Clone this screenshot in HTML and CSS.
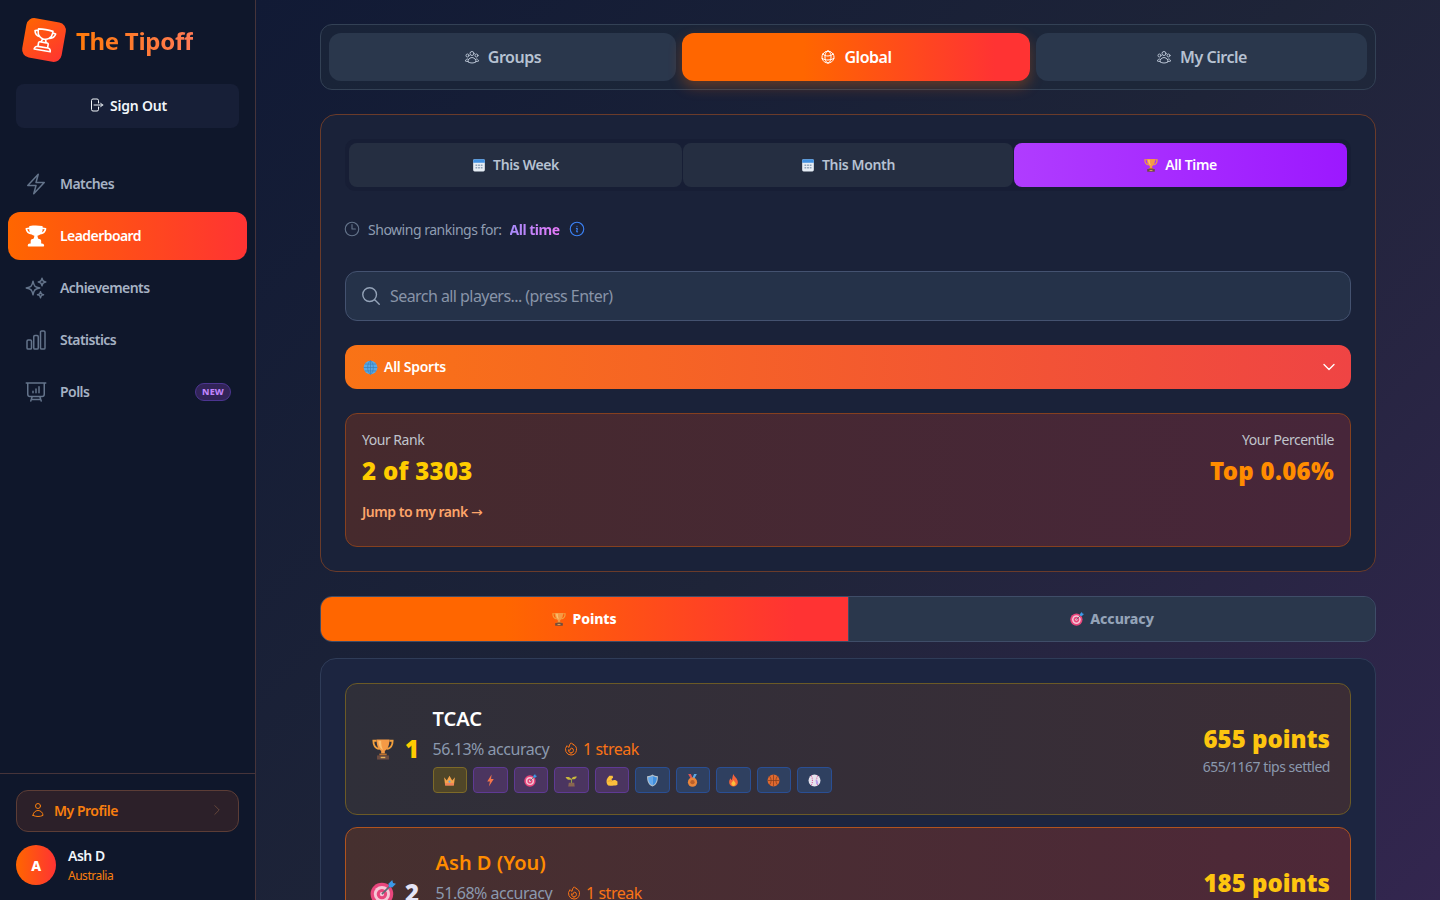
FILE: index.html
```html
<!DOCTYPE html>
<html>
  <head>
    <title>The Tipoff - Leaderboard</title>
    <link rel="stylesheet" href="styles.css">
  </head>
  <body>
    <svg class="sprite" width="0" height="0">
      <symbol id="em-trophy" viewBox="0 0 24 24">
        <path d="M5 3H1.5c0 5 2 8 6 9M19 3h3.5c0 5-2 8-6 9" fill="none" stroke="#f2a03d" stroke-width="2"/>
        <path d="M5 1.500h14c0 7-2 11-5 12.500v3h-4v-3C7 12.500 5 8.500 5 1.500z" fill="#f59a45"/>
        <path d="M7 3h3c0 4 .5 7 2 10-3-1-5-5-5-10z" fill="#fbc06f"/>
        <rect x="8" y="17" width="8" height="2" fill="#b9702f"/>
        <rect x="5.5" y="19" width="13" height="4.5" fill="#6d4c41"/>
        <rect x="9.5" y="20.5" width="5" height="1.5" fill="#e6b35c"/>
      </symbol>
      <symbol id="em-target" viewBox="0 0 24 24">
        <circle cx="11" cy="13" r="10.5" fill="#e8467c"/>
        <circle cx="11" cy="13" r="7.5" fill="#f6c6d6"/>
        <circle cx="11" cy="13" r="4.8" fill="#e8467c"/>
        <circle cx="11" cy="13" r="2" fill="#f6c6d6"/>
        <path d="M11 13 20 4" stroke="#5d6b76" stroke-width="1.5"/>
        <path d="M17 3.5 20.5 0l.8 2.7L24 3.5 20.5 7 17.5 6.500z" fill="#3b9ae8"/>
      </symbol>
      <symbol id="em-calendar" viewBox="0 0 24 24">
        <rect x="2" y="2" width="20" height="21" rx="2.5" fill="#e6edf5"/>
        <path d="M2 8V4.500A2.500 2.500 0 0 1 4.500 2h15A2.500 2.500 0 0 1 22 4.500V8z" fill="#3f8fe0"/>
        <path d="M6 11h3v2.500H6zM10.500 11h3v2.500h-3zM15 11h3v2.500h-3zM6 15.500h3V18H6zM10.500 15.500h3V18h-3zM15 15.500h3V18h-3z" fill="#8fa3b8"/>
      </symbol>
      <symbol id="em-globe" viewBox="0 0 24 24">
        <circle cx="12" cy="12" r="11" fill="#5aa9e6"/>
        <path d="M1 12h22M12 1v22M3 6.500h18M3 17.500h18M12 1C6 5 6 19 12 23M12 1c6 4 6 18 0 22" fill="none" stroke="#3d7fb5" stroke-width="1.1"/>
      </symbol>
      <symbol id="ic-bolt" viewBox="0 0 24 24"><path d="m3.750 13.500 10.500-11.250L12 10.500h8.250L9.750 21.750 12 13.500H3.750Z"/></symbol>
      <symbol id="ic-trophy" viewBox="0 0 24 24"><path d="M16.500 18.750h-9m9 0a3 3 0 0 1 3 3h-15a3 3 0 0 1 3-3m9 0v-3.375c0-.621-.503-1.125-1.125-1.125h-.871M7.500 18.750v-3.375c0-.621.504-1.125 1.125-1.125h.872m5.007 0H9.497m5.007 0a7.454 7.454 0 0 1-.982-3.172M9.497 14.250a7.454 7.454 0 0 0 .981-3.172M5.250 4.236c-.982.143-1.954.317-2.916.52A6.003 6.003 0 0 0 7.730 9.728M5.250 4.236V4.500c0 2.108.966 3.990 2.480 5.228M5.250 4.236V2.721C7.456 2.410 9.710 2.250 12 2.250c2.291 0 4.545.16 6.750.47v1.516M7.730 9.728a6.726 6.726 0 0 0 2.748 1.350m8.272-6.842V4.500c0 2.108-.966 3.990-2.480 5.228m2.480-5.492a46.320 46.320 0 0 1 2.916.52 6.003 6.003 0 0 1-5.395 4.972m0 0a6.726 6.726 0 0 1-2.749 1.350m0 0a6.772 6.772 0 0 1-3.044 0"/></symbol>
      <symbol id="ic-trophy-solid" viewBox="0 0 24 24"><path fill-rule="evenodd" d="M5.166 2.621v.858c-1.035.148-2.059.33-3.071.543a.75.75 0 0 0-.584.859 6.753 6.753 0 0 0 6.138 5.6 6.730 6.730 0 0 0 2.743 1.346A6.707 6.707 0 0 1 9.279 15H8.540c-1.036 0-1.875.84-1.875 1.875V19.500h-.75a2.250 2.250 0 0 0-2.250 2.250c0 .414.336.75.75.75h15a.75.75 0 0 0 .75-.75 2.250 2.250 0 0 0-2.250-2.250h-.75v-2.625c0-1.036-.84-1.875-1.875-1.875h-.739a6.706 6.706 0 0 1-1.112-3.173 6.730 6.730 0 0 0 2.743-1.347 6.753 6.753 0 0 0 6.139-5.600.75.75 0 0 0-.585-.858 47.077 47.077 0 0 0-3.070-.543V2.620a.75.75 0 0 0-.658-.744 49.220 49.220 0 0 0-6.093-.377c-2.063 0-4.096.128-6.093.377a.75.75 0 0 0-.657.744Zm0 2.629c0 1.196.312 2.320.857 3.294A5.266 5.266 0 0 1 3.160 5.337a45.600 45.600 0 0 1 2.006-.343v.256Zm13.500 0v-.256c.674.1 1.343.214 2.006.343a5.265 5.265 0 0 1-2.863 3.207 6.720 6.720 0 0 0 .857-3.294Z"/></symbol>
      <symbol id="ic-sparkles" viewBox="0 0 24 24"><path d="M9.813 15.904 9 18.750l-.813-2.846a4.500 4.500 0 0 0-3.090-3.090L2.250 12l2.846-.813a4.500 4.500 0 0 0 3.090-3.090L9 5.250l.813 2.846a4.500 4.500 0 0 0 3.090 3.090L15.750 12l-2.846.813a4.500 4.500 0 0 0-3.090 3.090ZM18.259 8.715 18 9.750l-.259-1.035a3.375 3.375 0 0 0-2.455-2.456L14.250 6l1.036-.259a3.375 3.375 0 0 0 2.455-2.456L18 2.250l.259 1.035a3.375 3.375 0 0 0 2.456 2.456L21.750 6l-1.035.259a3.375 3.375 0 0 0-2.456 2.456ZM16.894 20.567 16.500 21.750l-.394-1.183a2.250 2.250 0 0 0-1.423-1.423L13.500 18.750l1.183-.394a2.250 2.250 0 0 0 1.423-1.423l.394-1.183.394 1.183a2.250 2.250 0 0 0 1.423 1.423l1.183.394-1.183.394a2.250 2.250 0 0 0-1.423 1.423Z"/></symbol>
      <symbol id="ic-chart" viewBox="0 0 24 24"><path d="M3 13.125C3 12.504 3.504 12 4.125 12h2.250c.621 0 1.125.504 1.125 1.125v6.750C7.500 20.496 6.996 21 6.375 21h-2.250A1.125 1.125 0 0 1 3 19.875v-6.750ZM9.750 8.625c0-.621.504-1.125 1.125-1.125h2.250c.621 0 1.125.504 1.125 1.125v11.250c0 .621-.504 1.125-1.125 1.125h-2.250a1.125 1.125 0 0 1-1.125-1.125V8.625ZM16.500 4.125c0-.621.504-1.125 1.125-1.125h2.250C20.496 3 21 3.504 21 4.125v15.750c0 .621-.504 1.125-1.125 1.125h-2.250a1.125 1.125 0 0 1-1.125-1.125V4.125Z"/></symbol>
      <symbol id="ic-poll" viewBox="0 0 24 24"><path d="M3.750 3v11.250A2.250 2.250 0 0 0 6 16.500h2.250M3.750 3h-1.500m1.500 0h16.500m0 0h1.500m-1.500 0v11.250A2.250 2.250 0 0 1 18 16.500h-2.250m-7.500 0h7.500m-7.500 0-1 3m8.500-3 1 3m0 0 .5 1.500m-.5-1.500h-9.500m0 0-.5 1.500M9 11.250v1.500M12 9v3.750m3-6v6"/></symbol>
      <symbol id="ic-signout" viewBox="0 0 24 24"><path d="M15.750 9V5.250A2.250 2.250 0 0 0 13.500 3h-6a2.250 2.250 0 0 0-2.250 2.250v13.500A2.250 2.250 0 0 0 7.500 21h6a2.250 2.250 0 0 0 2.250-2.250V15m3 0 3-3m0 0-3-3m3 3H9"/></symbol>
      <symbol id="ic-user" viewBox="0 0 24 24"><path d="M15.750 6a3.750 3.750 0 1 1-7.500 0 3.750 3.750 0 0 1 7.500 0ZM4.501 20.118a7.500 7.500 0 0 1 14.998 0A17.933 17.933 0 0 1 12 21.750c-2.676 0-5.216-.584-7.499-1.632Z"/></symbol>
      <symbol id="ic-group" viewBox="0 0 24 24"><path d="M18 18.720a9.094 9.094 0 0 0 3.741-.479 3 3 0 0 0-4.682-2.720m.94 3.198.001.031c0 .225-.012.447-.037.666A11.944 11.944 0 0 1 12 21c-2.170 0-4.207-.576-5.963-1.584A6.062 6.062 0 0 1 6 18.719m12 0a5.971 5.971 0 0 0-.941-3.197m0 0A5.995 5.995 0 0 0 12 12.750a5.995 5.995 0 0 0-5.058 2.772m0 0a3 3 0 0 0-4.681 2.720 8.986 8.986 0 0 0 3.740.477m.94-3.197a5.971 5.971 0 0 0-.94 3.197M15 6.750a3 3 0 1 1-6 0 3 3 0 0 1 6 0Zm6 3a2.250 2.250 0 1 1-4.500 0 2.250 2.250 0 0 1 4.500 0Zm-13.500 0a2.250 2.250 0 1 1-4.500 0 2.250 2.250 0 0 1 4.500 0Z"/></symbol>
      <symbol id="ic-globe" viewBox="0 0 24 24"><path d="M12 21a9.004 9.004 0 0 0 8.716-6.747M12 21a9.004 9.004 0 0 1-8.716-6.747M12 21c2.485 0 4.500-4.030 4.500-9S14.485 3 12 3m0 18c-2.485 0-4.500-4.030-4.500-9S9.515 3 12 3m0 0a8.997 8.997 0 0 1 7.843 4.582M12 3a8.997 8.997 0 0 0-7.843 4.582m15.686 0A11.953 11.953 0 0 1 12 10.500c-2.998 0-5.740-1.100-7.843-2.918m15.686 0A8.959 8.959 0 0 1 21 12c0 .778-.099 1.533-.284 2.253m0 0A17.919 17.919 0 0 1 12 16.500c-3.162 0-6.133-.815-8.716-2.247m0 0A9.015 9.015 0 0 1 3 12c0-1.605.42-3.113 1.157-4.418"/></symbol>
      <symbol id="ic-clock" viewBox="0 0 24 24"><path d="M12 6v6h4.500m4.500 0a9 9 0 1 1-18 0 9 9 0 0 1 18 0Z"/></symbol>
      <symbol id="ic-info" viewBox="0 0 24 24"><path d="m11.250 11.250.041-.02a.75.75 0 0 1 1.063.852l-.708 2.836a.75.75 0 0 0 1.063.853l.041-.021M21 12a9 9 0 1 1-18 0 9 9 0 0 1 18 0Zm-9-3.750h.008v.008H12V8.250Z"/></symbol>
      <symbol id="ic-search" viewBox="0 0 24 24"><path d="m21 21-5.197-5.197m0 0A7.500 7.500 0 1 0 5.196 5.196a7.500 7.500 0 0 0 10.607 10.607Z"/></symbol>
      <symbol id="ic-fire" viewBox="0 0 24 24"><path d="M15.362 5.214A8.252 8.252 0 0 1 12 21 8.250 8.250 0 0 1 6.038 7.047 8.287 8.287 0 0 0 9 9.601a8.983 8.983 0 0 1 3.361-6.867 8.210 8.210 0 0 0 3 2.480Z"/><path d="M12 18a3.750 3.750 0 0 0 .495-7.468 5.990 5.990 0 0 0-1.925 3.547 5.975 5.975 0 0 1-2.133-1.001A3.750 3.750 0 0 0 12 18Z"/></symbol>
    </svg>

    <div class="app">
      <aside class="sidebar">
        <div class="brand">
          <div class="brand-tile"><svg class="icon brand-cup"><use href="#ic-trophy"/></svg></div>
          <span class="brand-name">The Tipoff</span>
        </div>
        <button class="sign-out"><svg class="icon icon-16"><use href="#ic-signout"/></svg>Sign Out</button>

        <nav class="nav">
          <a class="nav-item"><svg class="icon nav-icon"><use href="#ic-bolt"/></svg>Matches</a>
          <a class="nav-item nav-item-active"><svg class="icon nav-icon nav-icon-solid"><use href="#ic-trophy-solid"/></svg>Leaderboard</a>
          <a class="nav-item"><svg class="icon nav-icon"><use href="#ic-sparkles"/></svg>Achievements</a>
          <a class="nav-item"><svg class="icon nav-icon"><use href="#ic-chart"/></svg>Statistics</a>
          <a class="nav-item"><svg class="icon nav-icon"><use href="#ic-poll"/></svg>Polls<span class="new-badge">NEW</span></a>
        </nav>

        <div class="sidebar-foot">
          <button class="profile-btn">
            <svg class="icon icon-16"><use href="#ic-user"/></svg>
            <span class="profile-label">My Profile</span>
            <svg class="icon profile-chevron" viewBox="0 0 24 24"><path d="m8.250 4.500 7.500 7.500-7.500 7.500"/></svg>
          </button>
          <div class="user">
            <div class="avatar">A</div>
            <div>
              <div class="user-name">Ash D</div>
              <div class="user-country">Australia</div>
            </div>
          </div>
        </div>
      </aside>

      <main class="main">
        <div class="scope-tabs">
          <button class="scope-tab"><svg class="icon icon-16"><use href="#ic-group"/></svg>Groups</button>
          <button class="scope-tab scope-tab-active"><svg class="icon icon-16"><use href="#ic-globe"/></svg>Global</button>
          <button class="scope-tab"><svg class="icon icon-16"><use href="#ic-group"/></svg>My Circle</button>
        </div>

        <section class="panel panel-filters">
          <div class="period-tabs">
            <button class="period-tab"><svg class="emoji"><use href="#em-calendar"/></svg>This Week</button>
            <button class="period-tab"><svg class="emoji"><use href="#em-calendar"/></svg>This Month</button>
            <button class="period-tab period-tab-active"><svg class="emoji"><use href="#em-trophy"/></svg>All Time</button>
          </div>

          <div class="showing">
            <svg class="icon showing-clock"><use href="#ic-clock"/></svg>
            <span>Showing rankings for:</span>
            <span class="showing-value">All time</span>
            <svg class="icon showing-info"><use href="#ic-info"/></svg>
          </div>

          <div class="search">
            <svg class="icon search-icon"><use href="#ic-search"/></svg>
            <span>Search all players... (press Enter)</span>
          </div>

          <div class="sport-select">
            <svg class="emoji"><use href="#em-globe"/></svg>
            <span>All Sports</span>
            <svg class="icon sport-chevron" viewBox="0 0 24 24"><path d="m19.500 8.250-7.500 7.500-7.500-7.500"/></svg>
          </div>

          <div class="rank-card">
            <div>
              <div class="rank-label">Your Rank</div>
              <div class="rank-value">2 of 3303</div>
              <div class="rank-jump">Jump to my rank <span class="rank-arrow">→</span></div>
            </div>
            <div class="rank-right">
              <div class="rank-label">Your Percentile</div>
              <div class="rank-value rank-value-orange">Top 0.06%</div>
            </div>
          </div>
        </section>

        <div class="metric-tabs">
          <button class="metric-tab metric-tab-active"><svg class="emoji"><use href="#em-trophy"/></svg>Points</button>
          <button class="metric-tab metric-tab-right"><svg class="emoji"><use href="#em-target"/></svg>Accuracy</button>
        </div>

        <section class="panel panel-board">
          <div class="player">
            <div class="player-rank">
              <span class="rank-emoji-box"><svg class="rank-emoji"><use href="#em-trophy"/></svg></span>
              <span class="rank-num rank-num-gold">1</span>
            </div>
            <div class="player-info">
              <div class="player-name">TCAC</div>
              <div class="player-stats">
                <span>56.13% accuracy</span>
                <span class="streak"><svg class="icon icon-16"><use href="#ic-fire"/></svg>1 streak</span>
              </div>
              <div class="badges">
                <span class="badge badge-gold">
                  <svg viewBox="0 0 24 24"><path d="M2 6l5 6 5-9 5 9 5-6-2 15H4z" fill="#f5a34a"/><path d="M4 17h16v4H4z" fill="#ef7f5c"/><circle cx="12" cy="14" r="2" fill="#5aa9e6"/></svg>
                </span>
                <span class="badge badge-purple">
                  <svg viewBox="0 0 24 24"><path d="M14 1 6 14h5l-2 9 9-14h-5z" fill="#f4744a"/></svg>
                </span>
                <span class="badge badge-purple"><svg><use href="#em-target"/></svg></span>
                <span class="badge badge-purple">
                  <svg viewBox="0 0 24 24"><path d="M12 20V9" stroke="#8fa04a" stroke-width="2"/><path d="M12 10C9 5 5 5 1 6c2 4 7 6 11 4zM12 9c2-4 6-5 10-4-2 4-6 6-10 4z" fill="#c9b73c"/><path d="M7 16h10l1 7H6z" fill="#8a6650"/></svg>
                </span>
                <span class="badge badge-purple">
                  <svg viewBox="0 0 24 24"><path d="M8 3h6l1 4-3 2 1 3c4-2 8-1 10 2v6c-3 2-12 2-17 1-4-3-4-10-1-14z" fill="#fbbf3c"/><path d="M5 14c3-2 6-2 8 0" stroke="#e8962e" stroke-width="1.5" fill="none"/></svg>
                </span>
                <span class="badge badge-blue">
                  <svg viewBox="0 0 24 24"><path d="M12 1c3 2 6 3 10 3 0 9-2 16-10 19C4 20 2 13 2 4c4 0 7-1 10-3z" fill="#b6c2cc"/><path d="M12 3c3 2 5 2.500 8 3 0 7-2 13-8 15z" fill="#3f8fe0"/><path d="M12 3C9 5 7 5.500 4 6c0 7 2 13 8 15z" fill="#62a8ee"/></svg>
                </span>
                <span class="badge badge-blue">
                  <svg viewBox="0 0 24 24"><path d="M4 0h5l4 9H9z" fill="#e05656"/><path d="M20 0h-5l-4 9h4z" fill="#5aa9e6"/><circle cx="12" cy="15" r="8.5" fill="#e8853c"/><circle cx="12" cy="15" r="4" fill="#b9602a"/></svg>
                </span>
                <span class="badge badge-blue">
                  <svg viewBox="0 0 24 24"><path d="M12 0c1 5 8 8 8 15a8 8 0 0 1-16 0c0-3 1-5 3-7 0 2 1 3 2 3 1-3 1-7 3-11z" fill="#f4633a"/><path d="M12 11c1 3 4 4 4 7a4 4 0 0 1-8 0c0-3 3-4 4-7z" fill="#fbbf3c"/></svg>
                </span>
                <span class="badge badge-blue">
                  <svg viewBox="0 0 24 24"><circle cx="12" cy="12" r="11" fill="#e0692f"/><path d="M1 12h22M12 1v22M4.500 4c4 4 4 12 0 16M19.500 4c-4 4-4 12 0 16" stroke="#7a3a1c" stroke-width="1.3" fill="none"/></svg>
                </span>
                <span class="badge badge-blue">
                  <svg viewBox="0 0 24 24"><circle cx="12" cy="12" r="11" fill="#e6e3ee"/><path d="M6 3c3 5 3 13 0 18M18 3c-3 5-3 13 0 18" stroke="#d65a9a" stroke-width="2" stroke-dasharray="2 2" fill="none"/><path d="M14 10c3 1 5 4 5 8l-4 1z" fill="#b79be8"/></svg>
                </span>
              </div>
            </div>
            <div class="player-score">
              <div class="player-points">655 points</div>
              <div class="player-tips">655/1167 tips settled</div>
            </div>
          </div>

          <div class="player player-you">
            <div class="player-rank">
              <span class="rank-emoji-box"><svg class="rank-emoji rank-emoji-lg"><use href="#em-target"/></svg></span>
              <span class="rank-num rank-num-silver">2</span>
            </div>
            <div class="player-info">
              <div class="player-name player-name-you">Ash D (You)</div>
              <div class="player-stats">
                <span>51.68% accuracy</span>
                <span class="streak"><svg class="icon icon-16"><use href="#ic-fire"/></svg>1 streak</span>
              </div>
              <div class="badges"></div>
            </div>
            <div class="player-score">
              <div class="player-points">185 points</div>
              <div class="player-tips">&nbsp;</div>
            </div>
          </div>
        </section>
      </main>
    </div>
  </body>
</html>
```
FILE: styles.css
```css
* {
  box-sizing: border-box;
}

html, body {
  margin: 0;
  height: 100%;
  overflow: hidden;
}

body {
  font-family: "Noto Sans", "Open Sans", sans-serif;
  letter-spacing: -0.03em;
  color: #e2e8f0;
  background: #0f172a;
}

button {
  font: inherit;
  letter-spacing: inherit;
  border: none;
  padding: 0;
}

.sprite {
  position: absolute;
}

.icon {
  width: 24px;
  height: 24px;
  flex-shrink: 0;
  fill: none;
  stroke: currentColor;
  stroke-width: 1.5;
  stroke-linecap: round;
  stroke-linejoin: round;
}

.icon-16 {
  width: 16px;
  height: 16px;
}

.emoji {
  width: 14px;
  height: 14px;
  flex-shrink: 0;
}

.app {
  display: flex;
  height: 100vh;
}

/* sidebar */
.sidebar {
  width: 256px;
  flex-shrink: 0;
  display: flex;
  flex-direction: column;
  background: #0f172b;
  border-right: 1px solid #46343a;
}

.brand {
  display: flex;
  align-items: center;
  gap: 12px;
  height: 84px;
  padding: 0 24px 4px;
}

.brand-tile {
  width: 40px;
  height: 40px;
  border-radius: 8px;
  display: flex;
  align-items: center;
  justify-content: center;
  color: #fff;
  background: linear-gradient(135deg, #ff6600, #ff3333);
  transform: rotate(10deg);
}

.brand-cup {
  width: 26px;
  height: 26px;
}

.brand-name {
  font-size: 24px;
  font-weight: 700;
  letter-spacing: -0.012em;
  background: linear-gradient(90deg, #ff7a0a, #ff7a55);
  -webkit-background-clip: text;
  background-clip: text;
  color: transparent;
}

.sign-out {
  display: flex;
  align-items: center;
  justify-content: center;
  gap: 6px;
  height: 44px;
  margin: 0 16px;
  padding-bottom: 2px;
  border-radius: 8px;
  font-size: 14px;
  font-weight: 600;
  letter-spacing: -0.015em;
  color: #f1f5f9;
  background: #171f37;
}

.nav {
  display: flex;
  flex-direction: column;
  gap: 4px;
  padding: 32px 8px 0;
}

.nav-item {
  display: flex;
  align-items: center;
  gap: 12px;
  height: 48px;
  padding: 0 16px 2px;
  border-radius: 12px;
  font-size: 14px;
  font-weight: 600;
  letter-spacing: -0.04em;
  color: #a6b2c4;
}

.nav-icon {
  color: #64748b;
  margin-top: 2px;
}

.nav-item-active {
  color: #fff;
  background: linear-gradient(90deg, #ff6600, #ff3333);
}

.nav-item-active .nav-icon {
  color: #fff;
}

.nav-icon-solid {
  fill: #fff;
  stroke: none;
}

.new-badge {
  margin-left: auto;
  margin-top: 2px;
  padding: 0 6px;
  height: 18px;
  line-height: 16px;
  border-radius: 9px;
  font-size: 9px;
  font-weight: 800;
  letter-spacing: 0.02em;
  color: #c084fc;
  background: #322458;
  border: 1px solid #4c3590;
}

.sidebar-foot {
  margin-top: auto;
  padding: 16px 16px 15px;
  border-top: 1px solid #46343a;
}

.profile-btn {
  display: flex;
  align-items: center;
  gap: 8px;
  width: 100%;
  height: 42px;
  padding: 0 14px 2px 13px;
  border-radius: 12px;
  font-size: 14px;
  font-weight: 600;
  color: #f97f0e;
  background: #2c2029;
  border: 1px solid #5c3d36;
}

.profile-label {
  flex: 1;
  text-align: left;
}

.profile-chevron {
  width: 14px;
  height: 14px;
  color: #6b4a3c;
}

.user {
  display: flex;
  align-items: center;
  gap: 12px;
  margin-top: 13px;
}

.avatar {
  width: 40px;
  height: 40px;
  border-radius: 50%;
  display: flex;
  align-items: center;
  justify-content: center;
  font-size: 14px;
  font-weight: 800;
  color: #fff;
  background: linear-gradient(90deg, #ff6600, #ff3333);
}

.user-name {
  font-size: 14px;
  line-height: 20px;
  font-weight: 600;
  color: #f1f5f9;
}

.user-country {
  font-size: 12px;
  line-height: 16px;
  margin-top: 2px;
  color: #f97f0e;
}

/* main column */
.main {
  flex: 1;
  min-width: 0;
  padding: 24px 64px;
  background: linear-gradient(135deg, #111a35 0%, #1e2438 50%, #33264f 100%);
}

.scope-tabs {
  display: grid;
  grid-template-columns: 347fr 348fr 331fr;
  gap: 6px;
  height: 66px;
  padding: 8px;
  border-radius: 12px;
  background: rgba(30, 41, 59, 0.6);
  border: 1px solid #334155;
}

.scope-tab {
  display: flex;
  align-items: center;
  justify-content: center;
  gap: 8px;
  border-radius: 12px;
  font-size: 16px;
  font-weight: 600;
  color: #b7c2d2;
  background: #2a374c;
}

.scope-tab-active {
  color: #fff;
  background: linear-gradient(90deg, #ff6600 35%, #ff3333 90%);
  box-shadow: 0 6px 14px rgba(255, 102, 0, 0.3);
}

.panel {
  border-radius: 16px;
  padding: 24px;
  background: #1a2240;
}

.panel-filters {
  margin-top: 24px;
  height: 458px;
  background: #1a2239;
  border: 1px solid #6a3b2a;
}

.period-tabs {
  display: grid;
  grid-template-columns: 333px 330px 333px;
  gap: 1px;
  height: 52px;
  padding: 4px;
  border-radius: 10px;
  background: #171e35;
}

.period-tab {
  display: flex;
  align-items: center;
  justify-content: center;
  gap: 7px;
  padding-bottom: 2px;
  border-radius: 8px;
  font-size: 14px;
  font-weight: 600;
  letter-spacing: -0.025em;
  color: #b7c2d2;
  background: #252e41;
}

.period-tab .emoji {
  margin-top: 2px;
}

.period-tab-active {
  color: #fff;
  background: linear-gradient(90deg, #b03cff, #9c18ff);
}

.showing {
  display: flex;
  align-items: center;
  gap: 8px;
  height: 20px;
  margin-top: 28px;
  font-size: 14px;
  color: #8f9db2;
}

.showing-clock {
  width: 18px;
  height: 18px;
  margin: 0 -1px 0 -2px;
  color: #64748b;
}

.showing-value {
  font-weight: 700;
  background: linear-gradient(90deg, #a78bfa, #e879f9);
  -webkit-background-clip: text;
  background-clip: text;
  color: transparent;
}

.showing-info {
  width: 18px;
  height: 18px;
  color: #3b82f6;
}

.search {
  display: flex;
  align-items: center;
  gap: 8px;
  height: 50px;
  margin-top: 32px;
  padding: 0 14px;
  border-radius: 12px;
  font-size: 16px;
  letter-spacing: -0.035em;
  color: #8894a8;
  background: #253249;
  border: 1px solid #445270;
}

.search-icon {
  width: 22px;
  height: 22px;
  color: #94a3b8;
}

.sport-select {
  display: flex;
  align-items: center;
  gap: 6px;
  height: 44px;
  margin-top: 24px;
  padding: 0 14px 2px 18px;
  border-radius: 12px;
  font-size: 14px;
  font-weight: 600;
  letter-spacing: -0.02em;
  color: #fff;
  background: linear-gradient(90deg, #f97316, #ef4444);
}

.sport-select .emoji {
  width: 15px;
  height: 15px;
  margin-top: 2px;
}

.sport-chevron {
  width: 16px;
  height: 16px;
  margin-left: auto;
  margin-top: 2px;
  stroke-width: 2;
}

.rank-card {
  display: flex;
  justify-content: space-between;
  height: 134px;
  margin-top: 24px;
  padding: 16px;
  border-radius: 12px;
  background: linear-gradient(90deg, #462a2d, #47263a);
  border: 1px solid #85401f;
}

.rank-label {
  font-size: 14px;
  line-height: 20px;
  color: #c0c4cc;
}

.rank-value {
  margin-top: 5px;
  font-size: 24px;
  line-height: 32px;
  font-weight: 900;
  letter-spacing: 0.3px;
  color: #ffcc00;
}

.rank-value-orange {
  color: #ff8c00;
}

.rank-right {
  text-align: right;
}

.rank-jump {
  margin-top: 15px;
  font-size: 14px;
  line-height: 20px;
  font-weight: 600;
  color: #fda56a;
}

.rank-arrow {
  font-family: "DejaVu Sans", sans-serif;
  font-weight: 400;
}

.metric-tabs {
  display: grid;
  grid-template-columns: 1fr 1fr;
  height: 46px;
  margin-top: 24px;
  border-radius: 12px;
  overflow: hidden;
  background: #2a374c;
  border: 1px solid #3f4d68;
}

.metric-tab {
  display: flex;
  align-items: center;
  justify-content: center;
  gap: 6px;
  padding-bottom: 2px;
  font-size: 14px;
  font-weight: 800;
  letter-spacing: -0.005em;
  color: #94a3b8;
  background: #2a374c;
}

.metric-tab .emoji {
  margin-top: 2px;
}

.metric-tab-active {
  color: #fff;
  background: linear-gradient(90deg, #ff6600 35%, #ff3333 90%);
}

.metric-tab-right {
  border-left: 1px solid #3f4d68;
}

.panel-board {
  margin-top: 16px;
  height: 500px;
  background: #1c2540;
  border: 1px solid #2f3c58;
}

.player {
  display: flex;
  align-items: center;
  gap: 14px;
  padding: 20px;
  height: 132px;
  border-radius: 12px;
  background: linear-gradient(90deg, #2f2f39, #3b2d36);
  border: 1px solid #6b5a26;
}

.player-you {
  margin-top: 12px;
  background: linear-gradient(90deg, #46302f, #4e2838);
  border: 1px solid #b0531e;
}

.player-rank {
  display: flex;
  align-items: center;
  gap: 6px;
  flex-shrink: 0;
}

.player-you .player-rank {
  margin-right: 3px;
}

.rank-emoji-box {
  display: flex;
  justify-content: center;
  width: 33px;
}

.rank-emoji {
  width: 22px;
  height: 24px;
}

.rank-emoji-lg {
  width: 26px;
  height: 26px;
}

.rank-num {
  font-size: 24px;
  line-height: 32px;
  font-weight: 900;
}

.rank-num-gold {
  color: #ffcc00;
}

.rank-num-silver {
  color: #e4e4f5;
}

.player-info {
  flex: 1;
  min-width: 0;
}

.player-name {
  font-size: 20px;
  line-height: 28px;
  font-weight: 600;
  letter-spacing: 0;
  color: #fff;
}

.player-name-you {
  color: #ff8c00;
}

.player-stats {
  display: flex;
  align-items: center;
  gap: 14px;
  margin-top: 4px;
  font-size: 16px;
  line-height: 24px;
  color: #8b99ae;
}

.streak {
  display: flex;
  align-items: center;
  gap: 4px;
  color: #f97316;
}

.badges {
  display: flex;
  gap: 6px;
  min-height: 26px;
  margin-top: 6px;
}

.badge {
  display: flex;
  align-items: center;
  justify-content: center;
  width: 34.5px;
  height: 26px;
  border-radius: 4px;
}

.badge svg {
  width: 13px;
  height: 13px;
}

.badge-gold {
  background: #504628;
  border: 1px solid #7d6a28;
}

.badge-purple {
  background: #4b3560;
  border: 1px solid #5f3a94;
}

.badge-blue {
  background: #2f4060;
  border: 1px solid #2a4f94;
}

.player-score {
  padding-top: 2px;
  text-align: right;
  flex-shrink: 0;
}

.player-points {
  font-size: 24px;
  line-height: 32px;
  font-weight: 900;
  letter-spacing: 0;
  color: #fdc50f;
}

.player-tips {
  margin-top: 2px;
  font-size: 14px;
  line-height: 20px;
  color: #8b99ae;
}
```
